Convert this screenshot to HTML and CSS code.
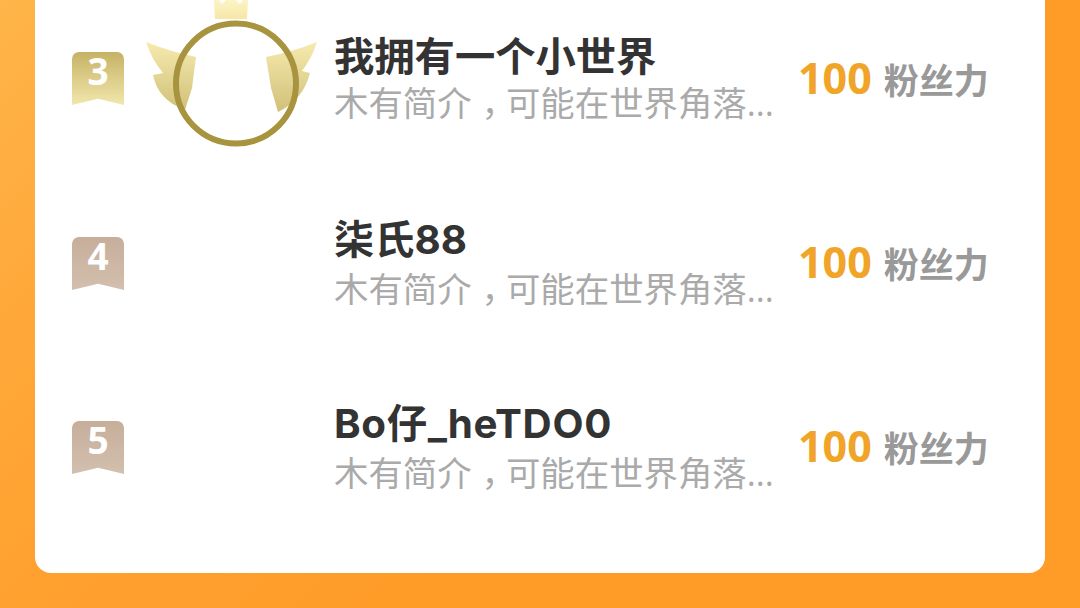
FILE: index.html
```html
<!DOCTYPE html>
<html lang="zh">
<head>
<meta charset="utf-8">
<title>粉丝力榜单</title>
<link rel="stylesheet" href="styles.css">
</head>
<body>
<main class="card">
  <section class="row row-first">
    <div class="badge badge-gold">3</div>
    <div class="avatar">
      <svg class="frame" width="172" height="147" viewBox="146 0 172 147" aria-hidden="true">
        <defs>
          <linearGradient id="wing" x1="0" y1="0" x2="0" y2="1">
            <stop offset="0" stop-color="#f6eaae"/>
            <stop offset="1" stop-color="#d0c078"/>
          </linearGradient>
          <linearGradient id="crown" x1="0" y1="0" x2="0" y2="1">
            <stop offset="0" stop-color="#fdf3c4"/>
            <stop offset="1" stop-color="#f6e7a8"/>
          </linearGradient>
        </defs>
        <path fill="url(#crown)" d="M214 0h5l3 4 4-4h10l4 4 3-4h5l-1 19h-32z"/>
        <path fill="url(#wing)" d="M146 42Q172 52 196 57L192 88 185 110Q158 100 153 75L163 73Q152 60 146 42z"/>
        <path fill="url(#wing)" d="M317 42Q292 52 266 57L271 88 278 112Q303 100 310 73L302 71Q312 58 317 42z"/>
        <circle cx="236" cy="83.5" r="60" fill="none" stroke="#a8933f" stroke-width="6"/>
      </svg>
    </div>
    <div class="info">
      <h2 class="name">我拥有一个小世界</h2>
      <p class="bio">木有简介<span class="comma">，</span>可能在世界角落...</p>
    </div>
    <div class="score"><span class="num">100</span><span class="unit">粉丝力</span></div>
  </section>
  <section class="row">
    <div class="badge badge-bronze">4</div>
    <div class="avatar"></div>
    <div class="info">
      <h2 class="name">柒氏88</h2>
      <p class="bio">木有简介<span class="comma">，</span>可能在世界角落...</p>
    </div>
    <div class="score"><span class="num">100</span><span class="unit">粉丝力</span></div>
  </section>
  <section class="row">
    <div class="badge badge-bronze">5</div>
    <div class="avatar"></div>
    <div class="info">
      <h2 class="name name-wide">Bo仔_heTDO0</h2>
      <p class="bio">木有简介<span class="comma">，</span>可能在世界角落...</p>
    </div>
    <div class="score"><span class="num">100</span><span class="unit">粉丝力</span></div>
  </section>
</main>
</body>
</html>
```
FILE: styles.css
```css
* { box-sizing: border-box; }
html, body { margin: 0; height: 100%; }
body {
  height: 608px;
  overflow: hidden;
  background: linear-gradient(135deg, #ffb549 0%, #ffa93b 18%, #ffa130 36%, #ff9c28 60%);
  font-family: "Open Sans", "Noto Sans CJK SC", sans-serif;
}
.card {
  height: 573px;
  margin: 0 35px;
  padding: 0 0 33px 37px;
  background: #fff;
  border-radius: 0 0 16px 16px;
  display: flex;
  flex-direction: column;
  justify-content: flex-end;
}
.row {
  flex: 0 0 184px;
  display: flex;
  align-items: center;
}
.badge {
  width: 52px;
  height: 53px;
  flex: none;
  margin-top: -1px;
  padding-bottom: 16px;
  border-radius: 7px 7px 0 0;
  clip-path: polygon(0 0, 100% 0, 100% 100%, 50% 88%, 0 100%);
  display: flex;
  align-items: center;
  justify-content: center;
  color: #fff;
  font-size: 37px;
  font-weight: 700;
}
.row-first .badge { margin-top: -3px; }
.badge-gold { background: linear-gradient(180deg, #c6b265 0%, #f1e7ac 100%); }
.badge-bronze { background: linear-gradient(180deg, #c6ae9a 0%, #d3bfae 100%); }
.avatar {
  width: 210px;
  height: 147px;
  flex: none;
  display: flex;
  justify-content: flex-end;
  padding-right: 16px;
}
.frame { display: block; flex: none; margin-top: -7px; }
.info { width: 464px; flex: none; }
.name {
  margin: 0;
  color: #333;
  font-family: "Inter", "Noto Sans CJK SC", sans-serif;
  font-size: 40.3px;
  line-height: 46px;
  font-weight: 700;
}
.name-wide { letter-spacing: 0.7px; }
.bio {
  margin: 3px 0 0;
  color: #aaa;
  font-size: 34.4px;
  line-height: 46px;
  white-space: nowrap;
}
.row-first .bio { margin-top: 0; }
.comma {
  display: inline-block;
  width: 1em;
  padding-left: 0.29em;
  font-feature-settings: "halt";
}
.score { display: flex; align-items: center; gap: 12px; }
.num { color: #f0a428; font-size: 43px; font-weight: 700; margin-top: -6px; }
.unit { color: #999; font-size: 35px; font-weight: 700; margin-top: -4px; }
```
